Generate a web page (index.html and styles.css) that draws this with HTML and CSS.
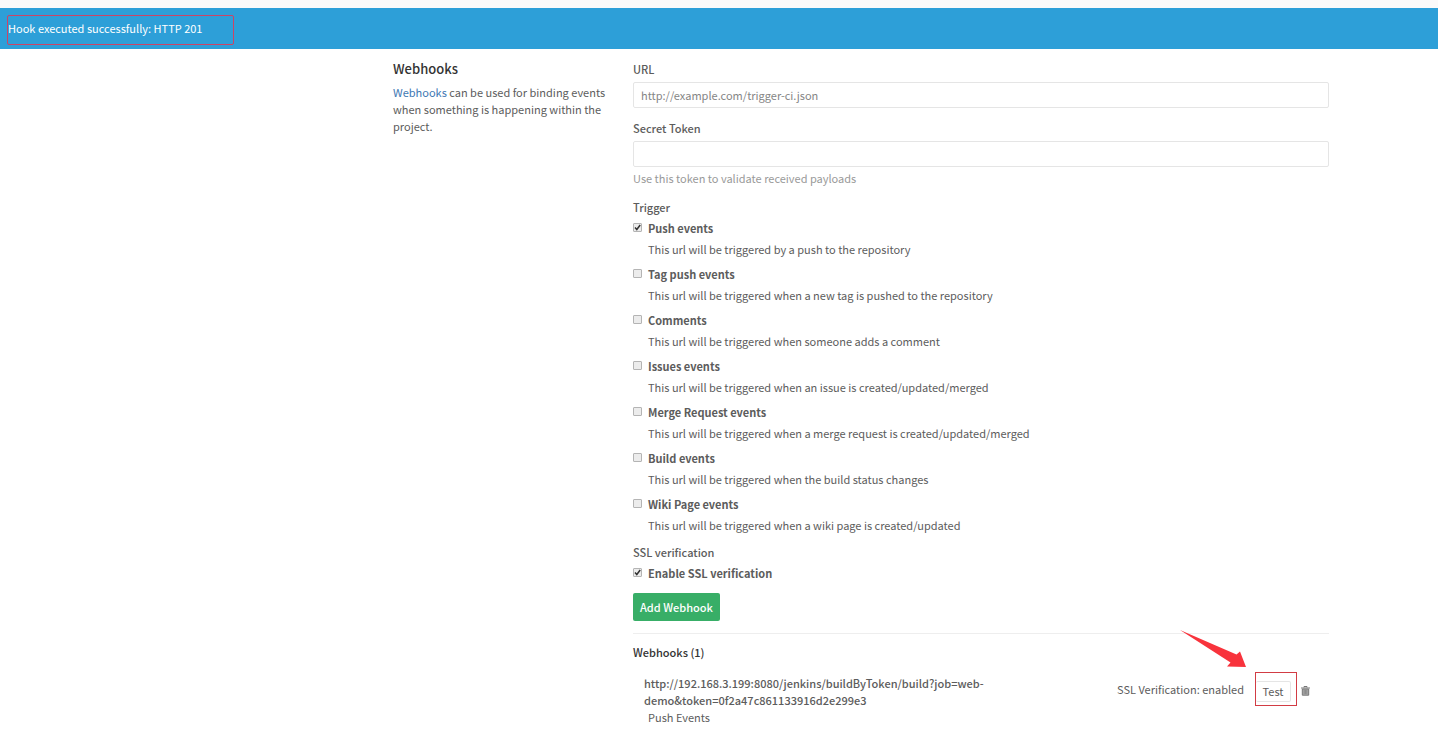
FILE: index.html
```html
<!DOCTYPE html>
<html lang="en">
<head>
<meta charset="utf-8">
<title>Webhooks</title>
<link rel="stylesheet" href="styles.css">
</head>
<body>
<div class="top-strip"></div>
<div class="flash" role="status">
  <span class="flash-text">Hook executed successfully: HTTP 201</span>
</div>
<main class="content">
  <div class="settings">
    <aside class="intro">
      <h1 class="intro-title">Webhooks</h1>
      <p class="intro-text"><a class="link" href="#">Webhooks</a> can be used for binding events when something is happening within the project.</p>
    </aside>
    <section class="panel">
      <form class="hook-form">
        <div class="field">
          <label class="label" for="url">URL</label>
          <input class="input" id="url" type="text" placeholder="http://example.com/trigger-ci.json">
        </div>
        <div class="field">
          <label class="label" for="token">Secret Token</label>
          <input class="input" id="token" type="text">
          <p class="help">Use this token to validate received payloads</p>
        </div>
        <div class="group">
          <span class="label">Trigger</span>
          <ul class="events">
            <li class="event"><input class="check" type="checkbox" id="push" checked><label class="event-name" for="push">Push events</label><p class="event-text">This url will be triggered by a push to the repository</p></li>
            <li class="event"><input class="check" type="checkbox" id="tag"><label class="event-name" for="tag">Tag push events</label><p class="event-text">This url will be triggered when a new tag is pushed to the repository</p></li>
            <li class="event"><input class="check" type="checkbox" id="comments"><label class="event-name" for="comments">Comments</label><p class="event-text">This url will be triggered when someone adds a comment</p></li>
            <li class="event"><input class="check" type="checkbox" id="issues"><label class="event-name" for="issues">Issues events</label><p class="event-text">This url will be triggered when an issue is created/updated/merged</p></li>
            <li class="event"><input class="check" type="checkbox" id="merge"><label class="event-name" for="merge">Merge Request events</label><p class="event-text">This url will be triggered when a merge request is created/updated/merged</p></li>
            <li class="event"><input class="check" type="checkbox" id="build"><label class="event-name" for="build">Build events</label><p class="event-text">This url will be triggered when the build status changes</p></li>
            <li class="event"><input class="check" type="checkbox" id="wiki"><label class="event-name" for="wiki">Wiki Page events</label><p class="event-text">This url will be triggered when a wiki page is created/updated</p></li>
          </ul>
        </div>
        <div class="group">
          <span class="label">SSL verification</span>
          <div class="event"><input class="check" type="checkbox" id="ssl" checked><label class="event-name" for="ssl">Enable SSL verification</label></div>
        </div>
        <button class="submit" type="button">Add Webhook</button>
      </form>
      <h2 class="list-title">Webhooks (1)</h2>
      <div class="hook">
        <div class="hook-info">
          <strong class="hook-url">http://192.168.3.199:8080/jenkins/buildByToken/build?job=web-<wbr>demo&amp;token=0f2a47c861133916d2e299e3</strong>
          <span class="badge">Push Events</span>
        </div>
        <div class="hook-actions">
          <span class="ssl">SSL Verification: enabled</span>
          <div class="marked">
            <button class="test" type="button">Test</button>
            <svg class="arrow" viewBox="0 0 68 40" aria-hidden="true"><path d="M0 0 L56.500 24.500 L60 21.500 L66 37 L47 36.500 L50.500 32.500 Z" fill="#f8333c"/></svg>
          </div>
          <button class="delete" type="button" aria-label="Delete">
            <svg class="trash" viewBox="0 0 9 10" aria-hidden="true"><path d="M3 1.500V.500h3v1" fill="none" stroke="#777"/><path d="M0 1.500h9v1H0z" fill="#777"/><path d="M1.300 3v6.200h6.400V3z" fill="#aaa" stroke="#777"/><path d="M3.200 4v4M4.500 4v4M5.800 4v4" stroke="#777" stroke-width=".6"/></svg>
          </button>
        </div>
      </div>
    </section>
  </div>
</main>
</body>
</html>
```
FILE: styles.css
```css
* { box-sizing: border-box; }
body {
  margin: 0;
  background: #fff;
  color: #5c5c5c;
  font-family: "Noto Sans CJK SC", "Open Sans", sans-serif;
  font-size: 11px;
  line-height: 17px;
}
h1, h2, p, ul { margin: 0; padding: 0; }
button, input { font: inherit; color: inherit; margin: 0; }
.top-strip { height: 8px; background: #fafafa; }
.flash { padding: 7px; height: 41px; background: #2d9fd8; color: #fff; }
.flash-text {
  display: block;
  width: 227px;
  padding: 4px 0 7px;
  border: 1px solid #cc4466;
  border-radius: 2px;
}
.content { margin-left: 284px; padding: 12px 16px; }
.settings {
  display: grid;
  grid-template-columns: 1fr 3fr;
  gap: 8px;
  max-width: 936px;
  margin: 0 auto;
}
.intro { padding-right: 12px; }
.intro-title { font-size: 13px; font-weight: 500; color: #333; line-height: 16px; margin-bottom: 7px; }
.link { color: #3e78b3; text-decoration: none; }
.field { margin-bottom: 12px; }
.label { display: block; margin-bottom: 4px; font-weight: 500; }
.input {
  display: block;
  width: 100%;
  height: 26px;
  padding: 0 7px;
  border: 1px solid #e5e5e5;
  border-radius: 2px;
  background: #fff;
}
.input::placeholder { color: #858585; opacity: 1; }
.help { margin-top: 3px; color: #999; }
.events { list-style: none; display: grid; gap: 8px; }
.event { display: grid; grid-template-columns: 15px 1fr; row-gap: 4px; }
.check {
  appearance: none;
  width: 9px;
  height: 9px;
  margin-top: 3px;
  border: 1px solid #b4b4b4;
  border-radius: 1px;
  background: #ececec;
}
.check:checked {
  background: #ececec url("data:image/svg+xml,%3Csvg xmlns='http://www.w3.org/2000/svg' viewBox='0 0 7 7'%3E%3Cpath d='M1 3.500L2.800 5.500L6.200 1' fill='none' stroke='%23333' stroke-width='1.500'/%3E%3C/svg%3E");
}
.event-name { font-weight: 700; justify-self: start; }
.event-text { grid-column: 2; }
.group { margin-bottom: 10px; }
.submit {
  display: block;
  height: 28px;
  margin-top: 11px;
  padding: 0 7px;
  border: 0;
  border-radius: 2px;
  background: #38ae67;
  color: #fff;
  font-weight: 500;
}
.list-title {
  margin-top: 12px;
  padding-top: 10px;
  border-top: 1px solid #eee;
  font-size: 11px;
  font-weight: 500;
  color: #333;
}
.hook {
  display: flex;
  justify-content: space-between;
  padding: 11px 19px 11px 11px;
}
.hook-info { width: 52%; padding-top: 3px; }
.hook-url { display: block; font-weight: 500; }
.badge { display: inline-block; padding: 0 4px; }
.hook-actions { display: flex; align-items: center; align-self: flex-start; }
.ssl { margin-right: 11px; }
.marked {
  position: relative;
  display: flex;
  align-items: flex-end;
  width: 42px;
  height: 34px;
  padding-bottom: 3px;
  border: 1px solid #d23c44;
}
.test {
  width: 35px;
  height: 21px;
  padding: 0;
  border: 1px solid #e5e5e5;
  border-left: 0;
  border-radius: 2px;
  background: #fff;
}
.arrow { position: absolute; left: -76px; top: -43px; width: 68px; height: 40px; }
.delete { display: flex; margin-left: 4px; padding: 4px 0 0; border: 0; background: none; }
.trash { width: 9px; height: 10px; }
```
